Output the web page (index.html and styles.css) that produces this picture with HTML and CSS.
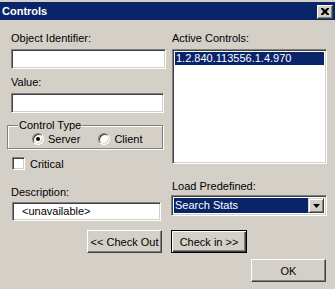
FILE: index.html
```html
<!DOCTYPE html>
<html>
<head>
    <title>Controls</title>
    <link rel="stylesheet" href="styles.css">
</head>
<body>
    <div class="dialog">
        <!-- Caption bar -->
        <div class="titlebar">
            <span class="title">Controls</span>
            <span class="close-btn">
                <svg width="8" height="7" viewBox="0 0 8 7"><path d="M0 0h2l2 2 2-2h2v1l-2 2v1l2 2v1h-2l-2-2-2 2h-2v-1l2-2v-1l-2-2z" fill="#000"/></svg>
            </span>
        </div>

        <div class="panes">
            <!-- Left pane -->
            <div class="pane-left">
                <div class="label">Object Identifier:</div>
                <div class="field field-oid"></div>
                <div class="label label-value">Value:</div>
                <div class="field field-value"></div>

                <fieldset class="group">
                    <legend>Control Type</legend>
                    <div class="radio-row">
                        <span class="radio checked"></span><span class="radio-text">Server</span>
                        <span class="radio"></span><span class="radio-text">Client</span>
                    </div>
                </fieldset>

                <div class="check-row">
                    <span class="checkbox"></span><span>Critical</span>
                </div>

                <div class="label label-desc">Description:</div>
                <div class="field field-desc">&lt;unavailable&gt;</div>
            </div>

            <!-- Right pane -->
            <div class="pane-right">
                <div class="label">Active Controls:</div>
                <div class="listbox">
                    <div class="list-item selected">1.2.840.113556.1.4.970</div>
                </div>
                <div class="label label-load">Load Predefined:</div>
                <div class="combo">
                    <span class="combo-text">Search Stats</span>
                    <span class="combo-btn">
                        <svg width="7" height="4" viewBox="0 0 7 4"><path d="M0 0h7l-3.5 4z" fill="#000"/></svg>
                    </span>
                </div>
            </div>
        </div>

        <!-- Move buttons -->
        <div class="move-row">
            <div class="btn btn-checkout">&lt;&lt; Check Out</div>
            <div class="btn btn-default">Check in &gt;&gt;</div>
        </div>

        <div class="ok-row">
            <div class="btn btn-ok">OK</div>
        </div>
    </div>
</body>
</html>
```

FILE: styles.css
```css
/* Whole window */
body {
    margin: 0;
    background-color: #d4d0c8;
    font-family: "Liberation Sans", Arial, sans-serif;
    font-size: 11px;
    color: #000;
}

.dialog {
    width: 335px;
    height: 289px;
    padding-top: 2px;
    box-sizing: border-box;
}

/* Caption bar */
.titlebar {
    height: 18px;
    background-color: #0a246a;
    display: flex;
    align-items: center;
    justify-content: space-between;
    padding: 0 2px 0 2px;
}

.title {
    color: #fff;
    font-weight: bold;
    font-size: 11px;
}

.close-btn {
    width: 14px;
    height: 12px;
    background-color: #d4d0c8;
    border: 1px solid;
    border-color: #fff #404040 #404040 #fff;
    box-shadow: inset -1px -1px 0 #808080;
    display: flex;
    align-items: center;
    justify-content: center;
    margin-top: 1px;
}

/* Two panes */
.panes {
    display: flex;
    padding-left: 11px;
    gap: 6px;
}

.pane-left {
    width: 155px;
}

.pane-right {
    width: 155px;
}

.label {
    height: 13px;
    line-height: 13px;
    margin-top: 12px;
}

.label-value {
    margin-top: 7px;
}

.label-desc,
.label-load {
    margin-top: 16px;
}

/* Sunken edit boxes */
.field {
    background-color: #fff;
    border: 1px solid;
    border-color: #808080 #fff #fff #808080;
    box-shadow: inset 1px 1px 0 #404040, inset -1px -1px 0 #d4d0c8;
    box-sizing: border-box;
    height: 20px;
    margin-top: 4px;
}

.field-oid {
    width: 155px;
}

.field-value {
    width: 153px;
}

.field-desc {
    width: 149px;
    height: 19px;
    margin-top: 3px;
    margin-left: 1px;
    padding-left: 9px;
    line-height: 17px;
}

/* Group box */
.group {
    margin: 6px 0 0 -4px;
    padding: 0 0 3px 0;
    width: 156px;
    box-sizing: border-box;
    border: 1px solid #808080;
    box-shadow: 1px 1px 0 #fff, inset 1px 1px 0 #fff;
}

.group legend {
    padding: 0 1px;
    margin-left: 10px;
    height: 13px;
    line-height: 13px;
    background-color: #d4d0c8;
}

.radio-row {
    display: flex;
    align-items: center;
    height: 13px;
    padding-left: 24px;
}

.radio {
    width: 12px;
    height: 12px;
    box-sizing: border-box;
    border-radius: 50%;
    border: 1px solid;
    border-color: #808080 #fff #fff #808080;
    background-color: #fff;
    box-shadow: inset 1px 1px 0 #404040, inset -1px -1px 0 #d4d0c8;
    display: flex;
    align-items: center;
    justify-content: center;
}

.radio.checked::after {
    content: "";
    width: 4px;
    height: 4px;
    border-radius: 50%;
    background-color: #000;
}

.radio-text {
    margin-left: 4px;
    margin-right: 18px;
}

/* Checkbox */
.check-row {
    display: flex;
    align-items: center;
    margin-top: 8px;
    margin-left: 1px;
    height: 13px;
}

.checkbox {
    width: 13px;
    height: 13px;
    box-sizing: border-box;
    background-color: #fff;
    border: 1px solid;
    border-color: #808080 #fff #fff #808080;
    box-shadow: inset 1px 1px 0 #404040, inset -1px -1px 0 #d4d0c8;
    margin-right: 5px;
}

/* List box */
.listbox {
    margin-top: 4px;
    height: 115px;
    background-color: #fff;
    border: 1px solid;
    border-color: #808080 #fff #fff #808080;
    box-shadow: inset 1px 1px 0 #404040, inset -1px -1px 0 #d4d0c8;
    box-sizing: border-box;
    padding: 2px;
}

.list-item {
    height: 13px;
    line-height: 13px;
    padding-left: 1px;
}

.list-item.selected {
    background-color: #0a246a;
    color: #fff;
}

/* Combo box */
.combo {
    margin-top: 2px;
    margin-left: -1px;
    height: 21px;
    background-color: #fff;
    border: 1px solid;
    border-color: #808080 #fff #fff #808080;
    box-shadow: inset 1px 1px 0 #404040, inset -1px -1px 0 #d4d0c8;
    box-sizing: border-box;
    padding: 2px;
    display: flex;
}

.combo-text {
    flex: 1;
    background-color: #0a246a;
    color: #fff;
    line-height: 15px;
    padding-left: 1px;
}

.combo-btn {
    width: 16px;
    box-sizing: border-box;
    background-color: #d4d0c8;
    border: 1px solid;
    border-color: #d4d0c8 #404040 #404040 #d4d0c8;
    box-shadow: inset 1px 1px 0 #fff, inset -1px -1px 0 #808080;
    display: flex;
    align-items: center;
    justify-content: center;
}

/* Push buttons */
.btn {
    height: 23px;
    box-sizing: border-box;
    border: 1px solid;
    border-color: #fff #404040 #404040 #fff;
    box-shadow: inset -1px -1px 0 #808080;
    display: flex;
    align-items: center;
    justify-content: center;
}

.btn-default {
    border: 1px solid #000;
    box-shadow: inset 1px 1px 0 #fff, inset -1px -1px 0 #404040, inset -2px -2px 0 #808080;
}

.move-row {
    display: flex;
    gap: 9px;
    padding-left: 87px;
    margin-top: 9px;
}

.btn-checkout {
    width: 75px;
}

.btn-default {
    width: 76px;
}

.ok-row {
    display: flex;
    justify-content: flex-end;
    padding-right: 9px;
    margin-top: 6px;
}

.btn-ok {
    width: 75px;
}
```
